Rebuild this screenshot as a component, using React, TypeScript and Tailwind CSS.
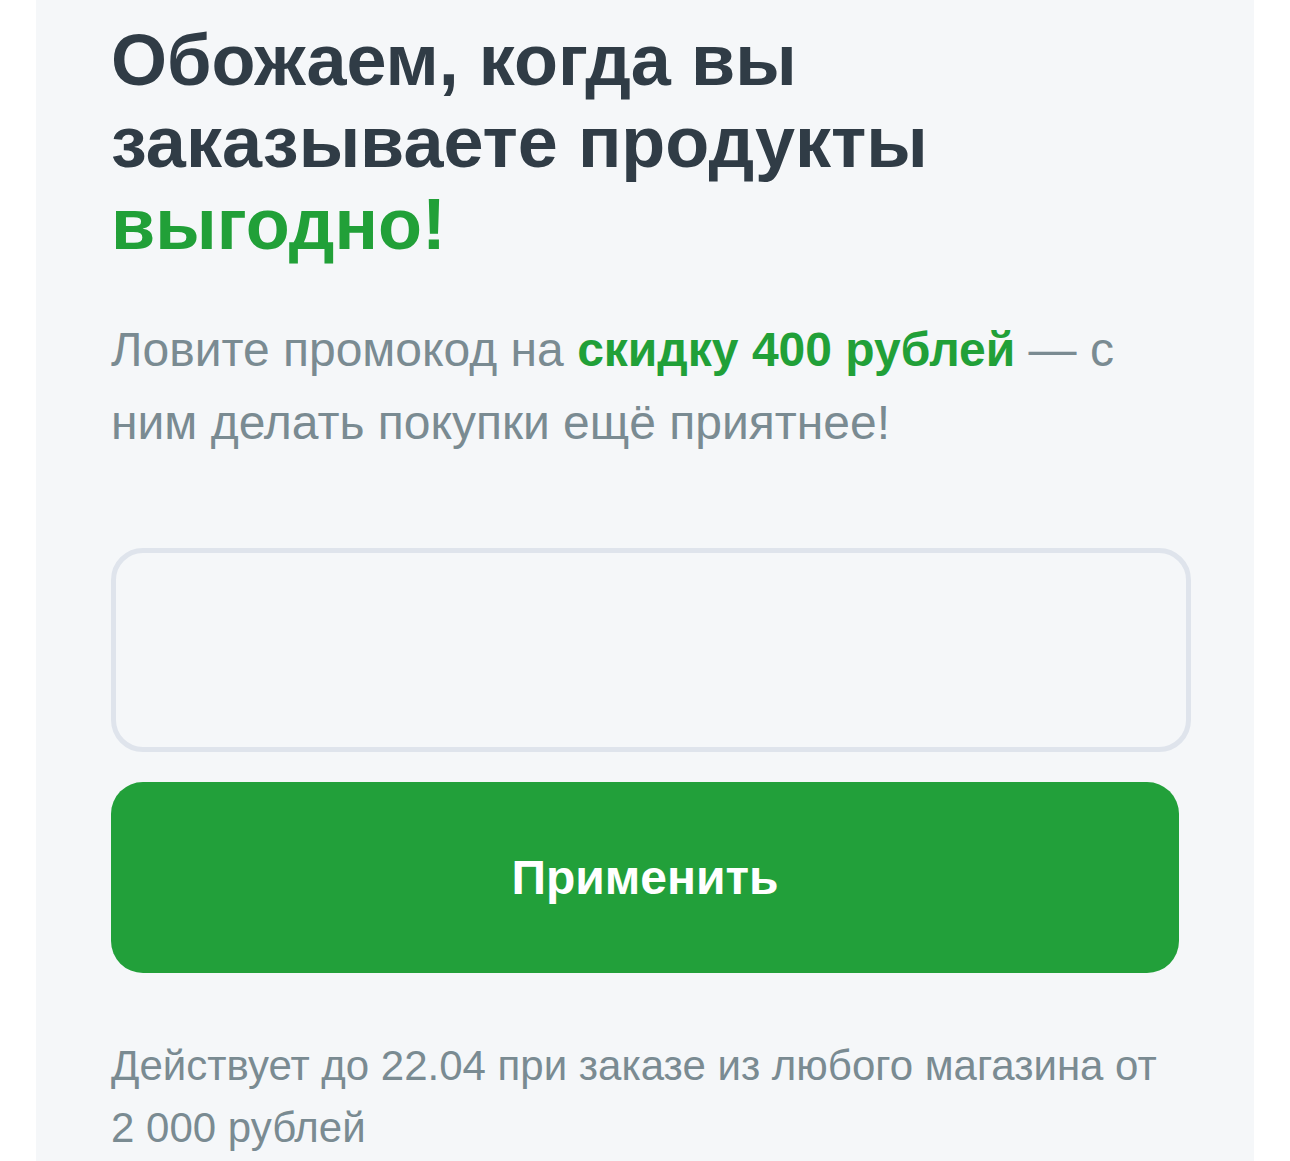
export default function App() {
    return (
        <div className="min-h-screen bg-white" style={{ fontFamily: '"Liberation Sans", Arial, sans-serif' }}>
            <div className="ml-[36px] w-[1218px] min-h-[1161px] bg-[#f5f7f9] pl-[75px] pr-[63px] pt-[19px]">
                {/* Heading */}
                <h1 className="text-[72px] leading-[82px] font-bold text-[#303c46]">
                    Обожаем, когда вы
                    <br />
                    заказываете продукты
                    <br />
                    <span className="text-[#21a038]">выгодно!</span>
                </h1>

                <p className="mt-[48px] text-[48px] leading-[73px] text-[#7a8b92]">
                    Ловите промокод на{' '}
                    <span className="font-bold text-[#21a038]">скидку 400 рублей</span> — с
                    <br />
                    ним делать покупки ещё приятнее!
                </p>

                {/* Promo input */}
                <input
                    type="text"
                    className="mt-[89px] block w-[1080px] h-[204px] rounded-[32px] border-[5px] border-[#dfe4ec] bg-[#f5f7f9] px-8 text-[42px] outline-none"
                />

                <button className="mt-[30px] w-[1068px] h-[191px] rounded-[32px] bg-[#22a03a] text-white text-[48px] font-bold">
                    Применить
                </button>

                <p className="mt-[62px] text-[42px] leading-[62px] text-[#7a8b92]">
                    Действует до 22.04 при заказе из любого магазина от
                    <br />
                    2 000 рублей
                </p>
            </div>
        </div>
    );
}
